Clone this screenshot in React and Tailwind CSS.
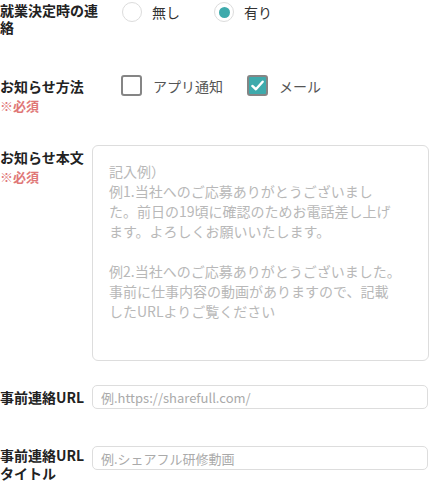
import React from "react";

const FONT = { fontFamily: '"Noto Sans CJK JP", "Noto Sans", sans-serif' };

function Radio({ checked, label }) {
  return (
    <label className="flex items-center">
      <span className="flex h-[20px] w-[20px] items-center justify-center rounded-full border border-[#dcdcdc] bg-white">
        {checked && <span className="h-[11px] w-[11px] rounded-full bg-[#3eaaac]" />}
      </span>
      <span className="ml-[10px] text-[14px] leading-[20px] text-[#333]">{label}</span>
    </label>
  );
}

function Checkbox({ checked, label }) {
  return (
    <label className="flex items-center">
      <span
        className={
          checked
            ? "flex h-[21px] w-[21px] items-center justify-center rounded-[3px] border-2 border-[#858585] bg-[#3eaaac]"
            : "flex h-[21px] w-[21px] items-center justify-center rounded-[3px] border-2 border-[#858585] bg-white"
        }
      >
        {checked && (
          <svg width="15" height="15" viewBox="0 0 16 16" fill="none">
            <path d="M2.5 8.5 L6.3 12 L13.5 4" stroke="#fff" strokeWidth="2.6" strokeLinecap="round" strokeLinejoin="round" />
          </svg>
        )}
      </span>
      <span className="ml-[11px] text-[14px] leading-[20px] text-[#555]">{label}</span>
    </label>
  );
}

export default function App() {
  return (
    <div className="w-[430px] h-[484px] overflow-hidden bg-white text-[#222]" style={FONT}>
      {/* Row 1 */}
      <div className="flex items-start">
        <div className="w-[100px] pt-[2px] text-[14px] font-bold leading-[17px]">就業決定時の連絡</div>
        <div className="ml-[22px] mt-[2px] flex items-center">
          <Radio label="無し" />
          <div className="ml-[34px]">
            <Radio checked label="有り" />
          </div>
        </div>
      </div>

      {/* Row 2 */}
      <div className="mt-[39px] flex items-start">
        <div className="w-[100px] pt-[1px]">
          <div className="text-[14px] font-bold leading-[20px]">お知らせ方法</div>
          <div className="text-[13px] font-bold leading-[20px] text-[#e07777]">※必須</div>
        </div>
        <div className="ml-[21px] flex items-center">
          <Checkbox label="アプリ通知" />
          <div className="ml-[24px]">
            <Checkbox checked label="メール" />
          </div>
        </div>
      </div>

      {/* Row 3 */}
      <div className="mt-[29px] flex items-start">
        <div className="w-[92px] pt-[2px]">
          <div className="text-[14px] font-bold leading-[20px]">お知らせ本文</div>
          <div className="text-[13px] font-bold leading-[20px] text-[#e07777]">※必須</div>
        </div>
        <textarea
          className="h-[216px] w-[337px] resize-none rounded-[6px] border border-[#dddddd] bg-white px-[16px] pt-[15px] text-[14px] leading-[20px] text-[#333] outline-none placeholder:text-[#b8b8b8]"
          style={FONT}
          placeholder={
            "記入例）\n例1.当社へのご応募ありがとうございまし\nた。前日の19頃に確認のためお電話差し上げ\nます。よろしくお願いいたします。\n\n例2.当社へのご応募ありがとうございました。\n事前に仕事内容の動画がありますので、記載\nしたURLよりご覧ください"
          }
        />
      </div>

      {/* Row 4 */}
      <div className="mt-[24px] flex items-center">
        <div className="w-[92px] text-[14px] font-bold leading-[20px]">事前連絡URL</div>
        <input
          className="h-[24px] w-[336px] rounded-[5px] border border-[#dddddd] bg-white px-[8px] text-[13px] text-[#333] outline-none placeholder:text-[#aaaaaa]"
          style={FONT}
          placeholder="例.https://sharefull.com/"
        />
      </div>

      {/* Row 5 */}
      <div className="mt-[37px] flex items-start">
        <div className="w-[92px] text-[14px] font-bold leading-[18px]">事前連絡URLタイトル</div>
        <input
          className="h-[24px] w-[336px] rounded-[5px] border border-[#dddddd] bg-white px-[8px] text-[13px] text-[#333] outline-none placeholder:text-[#aaaaaa]"
          style={FONT}
          placeholder="例.シェアフル研修動画"
        />
      </div>
    </div>
  );
}
